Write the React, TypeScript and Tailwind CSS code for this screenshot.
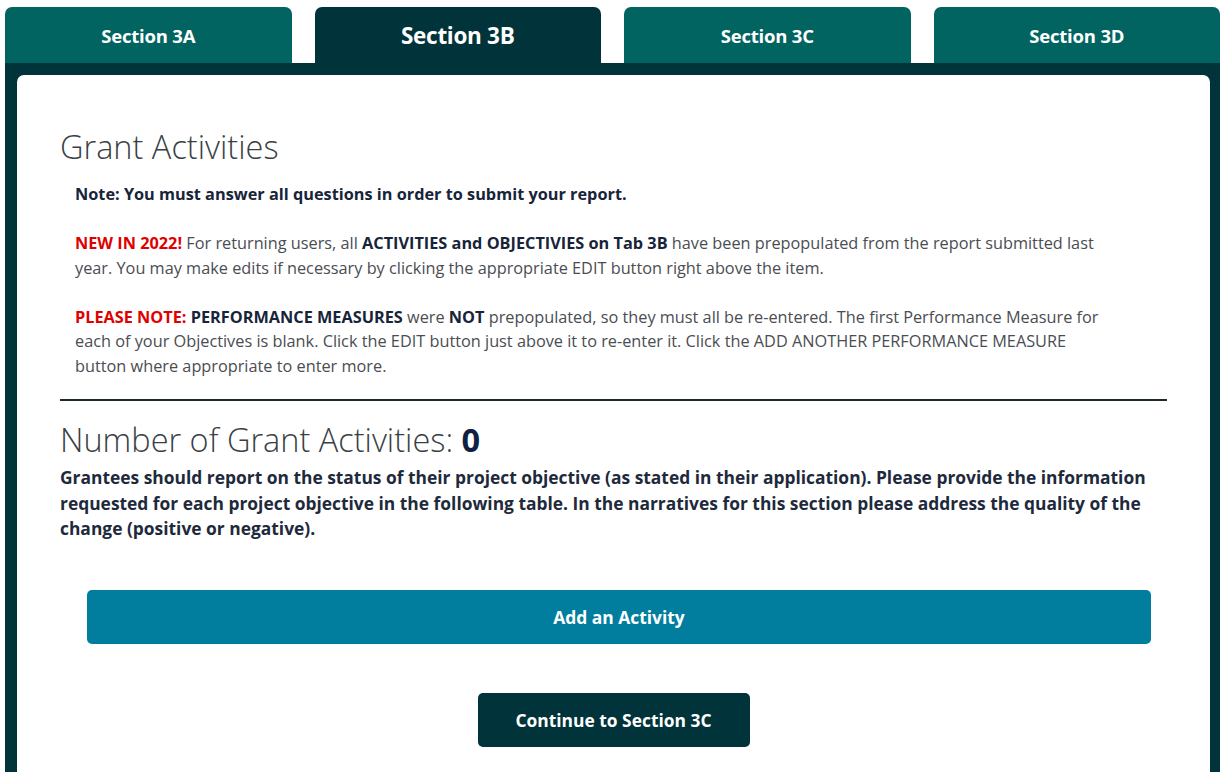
import React from "react";

const tabs = [
  { label: "Section 3A", active: false },
  { label: "Section 3B", active: true },
  { label: "Section 3C", active: false },
  { label: "Section 3D", active: false },
];

export default function App() {
  return (
    <div
      className="min-h-[772px] bg-white pt-[7px] pl-[5px] pr-[5px]"
      style={{ fontFamily: '"Open Sans", "Liberation Sans", sans-serif' }}
    >
      {/* tab strip */}
      <div className="flex gap-[23px]">
        {tabs.map((t) => (
          <div
            key={t.label}
            className={
              t.active
                ? "flex h-[56px] flex-1 items-center justify-center rounded-t-[7px] bg-[#01333a] pt-[1px] text-[22.5px] font-bold tracking-[-0.3px] text-white"
                : "flex h-[56px] flex-1 items-center justify-center rounded-t-[7px] bg-[#016461] pt-[1px] text-[18.5px] font-bold tracking-[-0.2px] text-white"
            }
          >
            {t.label}
          </div>
        ))}
      </div>

      {/* framed panel */}
      <div className="bg-[#01333a] pt-[12px] pl-[12px] pr-[10px]">
        <div className="min-h-[700px] rounded-t-[7px] bg-white px-[43px] pt-[53px] pb-[40px]">
          <h1 className="text-[32.5px] font-light leading-[38px] text-[#3a3f45]">
            Grant Activities
          </h1>

          <div className="mt-[16px] pl-[15px] text-[16.3px] leading-[24.5px] text-[#4a4d52]">
            <div className="w-[1035px]">
              <p className="font-bold text-[#17243a]">
                Note: You must answer all questions in order to submit your report.
              </p>
              <p className="mt-[24.5px]">
                <span className="font-bold text-[#e00000]">NEW IN 2022!</span> For returning
                users, all{" "}
                <span className="font-bold text-[#17243a]">
                  ACTIVITIES and OBJECTIVIES on Tab 3B
                </span>{" "}
                have been prepopulated from the report submitted last year. You may make edits if
                necessary by clicking the appropriate EDIT button right above the item.
              </p>
              <p className="mt-[24.5px]">
                <span className="font-bold text-[#e00000]">PLEASE NOTE:</span>{" "}
                <span className="font-bold text-[#17243a]">PERFORMANCE MEASURES</span> were{" "}
                <span className="font-bold text-[#17243a]">NOT</span> prepopulated, so they must
                all be re-entered. The first Performance Measure for each of your Objectives is
                blank. Click the EDIT button just above it to re-enter it. Click the ADD ANOTHER
                PERFORMANCE MEASURE button where appropriate to enter more.
              </p>
            </div>
          </div>

          <div className="mt-[21px] h-[2px] bg-[#1b2b2c]" />

          <h2 className="mt-[20px] text-[32.5px] font-light leading-[38px] text-[#3a3f45]">
            Number of Grant Activities: <span className="font-bold text-[#0f2140]">0</span>
          </h2>

          <p className="mt-[6px] text-[17.4px] font-bold leading-[25.5px] text-[#1e2a3c]">
            Grantees should report on the status of their project objective (as stated in their
            application). Please provide the information requested for each project objective in
            the following table. In the narratives for this section please address the quality of
            the change (positive or negative).
          </p>

          <button
            type="button"
            className="mt-[48px] ml-[27px] mr-[17px] flex h-[54px] w-[1064px] items-center justify-center rounded-[5px] bg-[#017e9e] pt-[1px] text-[17.4px] font-bold text-white"
          >
            Add an Activity
          </button>

          <div className="mt-[49px] flex justify-center">
            <button
              type="button"
              className="flex h-[54px] w-[272px] items-center justify-center rounded-[5px] bg-[#01333a] pt-[1px] text-[17.4px] font-bold text-white"
            >
              Continue to Section 3C
            </button>
          </div>
        </div>
      </div>
    </div>
  );
}
